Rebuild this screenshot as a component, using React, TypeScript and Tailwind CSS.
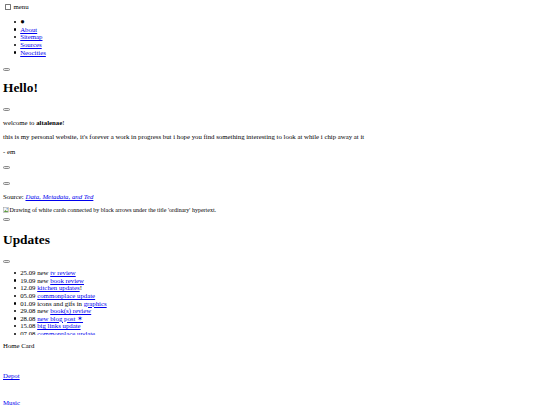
import React from "react";

function Btn({ className = "" }: { className?: string }) {
  return (
    <div
      className={
        "w-[7px] h-[3px] rounded-[1.5px] border-[0.8px] border-[#8a8a8a] bg-[#e9e9e9] " +
        className
      }
    />
  );
}

function A({ children, italic = false }: { children: React.ReactNode; italic?: boolean }) {
  return (
    <a
      href="#"
      className={"text-[#0000ee] underline " + (italic ? "italic" : "")}
    >
      {children}
    </a>
  );
}

function Li({ children }: { children: React.ReactNode }) {
  return (
    <li className="flex items-center h-[7.6px]">
      <span className="w-[2.4px] h-[2.4px] rounded-full bg-black shrink-0 mr-[3.8px]" />
      <span className="whitespace-nowrap">{children}</span>
    </li>
  );
}

const updates: { date: string; pre?: string; link: string; post?: string }[] = [
  { date: "25.09", pre: "new ", link: "tv review" },
  { date: "19.09", pre: "new ", link: "book review" },
  { date: "12.09", link: "kitchen updates", post: "!" },
  { date: "05.09", link: "commonplace update" },
  { date: "01.09", pre: "icons and gifs in ", link: "graphics" },
  { date: "29.08", pre: "new ", link: "book(s) review" },
  { date: "28.08", link: "new blog post \u2736" },
  { date: "15.08", link: "big links update" },
  { date: "07.08", link: "commonplace update" },
];

export default function App() {
  return (
    <div className="w-[540px] h-[405px] overflow-hidden bg-white text-black font-['Liberation_Serif',serif] text-[6.8px] leading-[7.6px] pl-[3px] pt-[3px]">
      <div className="flex items-center h-[8px]">
        <div className="ml-[2px] w-[5.5px] h-[5.5px] border-[0.7px] border-[#767676] rounded-[0.6px] bg-white" />
        <span className="ml-[3px]">menu</span>
      </div>

      <ul className="mt-[7.2px] pl-[11px]">
        <Li>
          <span className="text-[7.5px] leading-[7.6px]">{"\u25CF"}</span>
        </Li>
        <Li>
          <A>About</A>
        </Li>
        <Li>
          <A>Sitemap</A>
        </Li>
        <Li>
          <A>Sources</A>
        </Li>
        <Li>
          <A>Neocities</A>
        </Li>
      </ul>

      <Btn className="mt-[12.2px]" />

      <h1 className="mt-[9px] text-[13.4px] leading-[15px] font-bold">Hello!</h1>

      <Btn className="mt-[13px]" />

      <p className="mt-[7.2px]">
        welcome to <b>altalenae</b>!
      </p>
      <p className="mt-[6.9px]">
        this is my personal website, it's forever a work in progress but i hope you find something
        interesting to look at while i chip away at it
      </p>
      <p className="mt-[6.9px]">- em</p>

      <Btn className="mt-[11.2px]" />
      <Btn className="mt-[13px]" />

      <p className="mt-[7.5px] text-[6.8px]">
        Source: <A italic>Data, Metadata, and Ted</A>
      </p>
      <div className="mt-[6.2px] flex items-center text-[6px]">
        <svg width="6" height="6" viewBox="0 0 6 6" className="mr-[0.5px] shrink-0">
          <rect x="0.3" y="0.3" width="5.4" height="5.4" fill="#f4f4f4" stroke="#9a9a9a" strokeWidth="0.5" />
          <path d="M0.8 5 L2.4 3 L3.5 4.2 L4.3 3.4 L5.2 5 Z" fill="#5b9c3c" />
          <circle cx="4.2" cy="1.8" r="0.7" fill="#5a8fd8" />
        </svg>
        <span>Drawing of white cards connected by black arrows under the title 'ordinary' hypertext.</span>
      </div>

      <Btn className="mt-[3.5px]" />

      <h2 className="mt-[11px] text-[13.4px] leading-[15px] font-bold">Updates</h2>

      <Btn className="mt-[13px]" />

      <ul className="mt-[6.6px] h-[66px] overflow-hidden pl-[11px]">
        {updates.map((u, i) => (
          <Li key={i}>
            {u.date} {u.pre}
            <A>{u.link}</A>
            {u.post}
          </Li>
        ))}
      </ul>

      <p className="mt-[7px]">Home Card</p>
      <p className="mt-[22.4px]">
        <A>Depot</A>
      </p>
      <p className="mt-[19.4px]">
        <A>Music</A>
      </p>
    </div>
  );
}
